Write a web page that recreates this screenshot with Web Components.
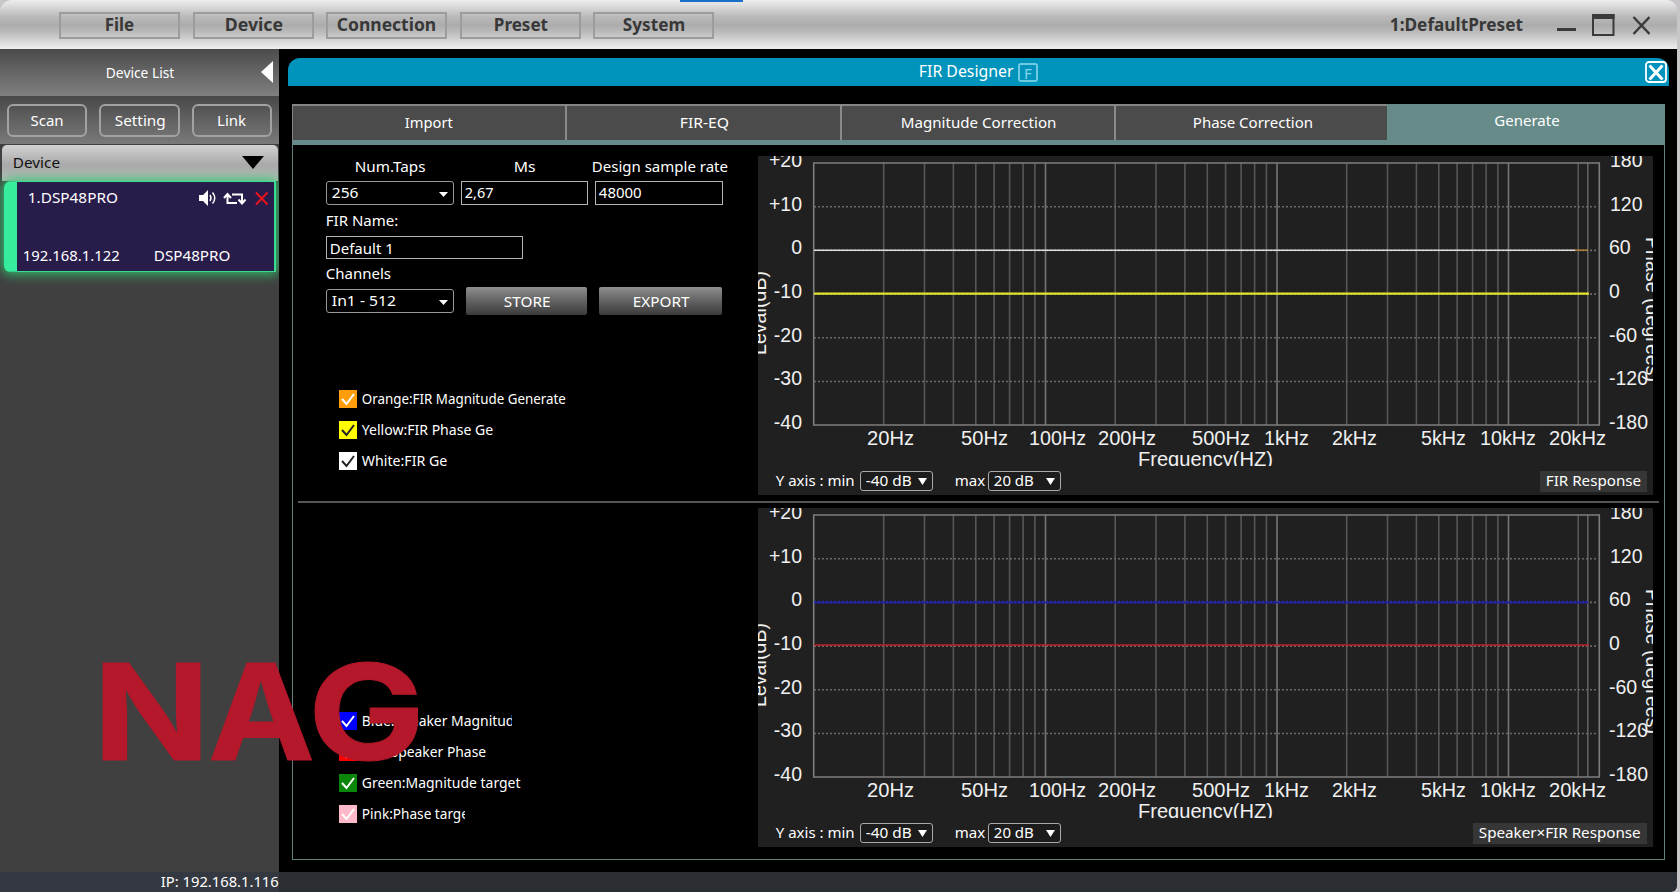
<!DOCTYPE html>
<html lang="en">
<head>
<meta charset="utf-8">
<title>FIR Designer</title>
<style>
    body {
        margin: 0;
        width: 1680px;
        height: 892px;
        overflow: hidden;
        background: #c9c6ca;
        font-family: "Noto Sans", "Open Sans", sans-serif;
        font-size: 15px;
        line-height: 20px;
        color: #fff;
    }
</style>
</head>
<body>
<dsp-app></dsp-app>
<script>
// Text squeezed horizontally to a given width, like a narrower UI face
class FitText extends HTMLElement {
    constructor() {
        super();
        this.attachShadow({ mode: "open" });
        this.shadowRoot.innerHTML = `
            <style>
                :host { display: inline-block; white-space: nowrap; }
                span { display: inline-block; transform-origin: 0 50%; }
            </style>
            <span><slot></slot></span>
        `;
    }

    connectedCallback() {
        const span = this.shadowRoot.querySelector("span");
        const w = Number(this.getAttribute("w"));
        const natural = span.offsetWidth;
        if (!w || !natural) return;
        this.style.width = w + "px";
        span.style.transform = `translate(-0.2px, var(--lift, -1px)) scaleX(${(w / natural).toFixed(4)})`;
    }
}

class AppHeader extends HTMLElement {
    constructor() {
        super();
        this.attachShadow({ mode: "open" });
    }

    connectedCallback() {
        const items = [["File", 29, 13], ["Device", 58, 12], ["Connection", 99, 13], ["Preset", 54, 12], ["System", 62, 0]];
        this.shadowRoot.innerHTML = `
            <style>
                :host {
                    --lift: -0.8px;
                    display: flex;
                    align-items: flex-start;
                    position: relative;
                    box-sizing: border-box;
                    height: 49px;
                    padding: 12px 27px 0 59px;
                    border-radius: 12px 10px 0 0;
                    background: linear-gradient(#ededed 0, #dcdcdc 12%, #b9b9b9 34%, #acacac 52%, #bcbcbc 66%, #e4e4e4 92%, #eee 100%);
                    color: #383838;
                    font-weight: 700;
                    font-size: 18px;
                }
                .item {
                    box-sizing: border-box;
                    width: 121px;
                    height: 27px;
                    border: 2px solid #9c9c9c;
                    text-align: center;
                    line-height: 23px;
                }
                .preset { margin-left: auto; line-height: 27px; }
                svg { margin-left: 33px; }
                .progress {
                    position: absolute;
                    left: 680px;
                    top: 0;
                    width: 63px;
                    height: 2px;
                    background: #1a70c8;
                }
            </style>
            ${items.map(([t, w, gap]) => `<div class="item" style="margin-right:${gap}px"><fit-text w="${w}">${t}</fit-text></div>`).join("")}
            <div class="preset"><fit-text w="133">1:DefaultPreset</fit-text></div>
            <svg width="94" height="27" fill="none" stroke="#3a3a3a">
                <path d="M1 17.500h19" stroke-width="3"/>
                <path d="M37 3h20.500v20H37z" stroke-width="2"/>
                <path d="M36 4.500h22.500" stroke-width="5"/>
                <path d="M77.500 5l16 17M93.500 5l-16 17" stroke-width="2.400"/>
            </svg>
            <div class="progress"></div>
        `;
    }
}

class DeviceCard extends HTMLElement {
    constructor() {
        super();
        this.attachShadow({ mode: "open" });
    }

    connectedCallback() {
        this.shadowRoot.innerHTML = `
            <style>
                :host {
                    display: flex;
                    flex-direction: column;
                    justify-content: space-between;
                    box-sizing: border-box;
                    width: 272px;
                    height: 91px;
                    margin-left: 4px;
                    padding: 6px 5px 4px 6px;
                    border: 1px solid #3bdc92;
                    border-right-width: 2px;
                    border-left: 13px solid #37ec9c;
                    border-radius: 7px 0 0 6px;
                    background: #281c4b;
                    box-shadow: 0 0 12px 2px #2fc46f;
                    position: relative;
                }
                .top { display: flex; align-items: center; padding-left: 5px; }
                svg { margin-left: auto; }
                .bottom { --lift: -1.800px; display: flex; gap: 34px; }
            </style>
            <div class="top">
                <fit-text w="90"><slot name="name"></slot></fit-text>
                <svg width="71" height="20" fill="none" stroke="#fff">
                    <path d="M1 7h4l5-5v16l-5-5H1z" fill="#fff" stroke="none"/>
                    <path d="M12 7q2 3 0 6M14.500 4.500q4.500 5.500 0 11" stroke-width="1.500"/>
                    <path d="M29.500 6.500V15H39M26 10l3.500-4 3.500 4M34 6.500h10V15M40.500 11.500l3.500 4 3.500-4" stroke-width="2"/>
                    <path d="M58 4.500l11.500 12M69.500 4.500l-11.500 12" stroke="#e8131c" stroke-width="2"/>
                </svg>
            </div>
            <div class="bottom">
                <fit-text w="97"><slot name="ip"></slot></fit-text>
                <fit-text w="77"><slot name="model"></slot></fit-text>
            </div>
        `;
    }
}

class DeviceSidebar extends HTMLElement {
    constructor() {
        super();
        this.attachShadow({ mode: "open" });
    }

    connectedCallback() {
        this.shadowRoot.innerHTML = `
            <style>
                :host { display: block; width: 279px; background: #404040; overflow: hidden; }
                .title {
                    display: flex;
                    align-items: center;
                    height: 47px;
                    padding: 0 6px 0 106px;
                    background: linear-gradient(#4b4b4b, #808080);
                }
                .title svg { margin: -1px 0 0 auto; }
                .buttons {
                    --lift: -0.500px;
                    display: flex;
                    gap: 12px;
                    height: 33px;
                    padding: 8px 7px 7px;
                    background: linear-gradient(#484848, #7a7a7a);
                }
                .buttons div {
                    flex: 1;
                    border: 2px solid #a2a2a2;
                    border-radius: 6px;
                    text-align: center;
                    line-height: 29px;
                }
                .group {
                    display: flex;
                    align-items: center;
                    justify-content: space-between;
                    height: 36px;
                    margin: 1px 1px 0 2px;
                    padding: 0 14px 0 11px;
                    border-radius: 5px 5px 0 0;
                    background: linear-gradient(#d2d2d2, #a9a9a9 55%, #bdbdbd);
                    color: #111;
                }
                .group svg { margin-top: -2px; }
            </style>
            <div class="title">
                <fit-text w="69">Device List</fit-text>
                <svg width="12" height="22"><path d="M12 0v22L0 11z" fill="#fff"/></svg>
            </div>
            <div class="buttons">
                <div><fit-text w="33">Scan</fit-text></div>
                <div><fit-text w="51">Setting</fit-text></div>
                <div><fit-text w="29">Link</fit-text></div>
            </div>
            <div class="group">
                <fit-text w="47">Device</fit-text>
                <svg width="22" height="13"><path d="M0 0h22L11 13z" fill="#000"/></svg>
            </div>
            <device-card>
                <span slot="name">1.DSP48PRO</span>
                <span slot="ip">192.168.1.122</span>
                <span slot="model">DSP48PRO</span>
            </device-card>
        `;
    }
}

class TabBar extends HTMLElement {
    constructor() {
        super();
        this.attachShadow({ mode: "open" });
    }

    connectedCallback() {
        const tabs = [["Import", 48], ["FIR-EQ", 49], ["Magnitude Correction", 156], ["Phase Correction", 120], ["Generate", 65]];
        this.shadowRoot.innerHTML = `
            <style>
                :host {
                    display: grid;
                    grid-template-columns: 275px 275px 274px 271px 278px;
                    box-sizing: border-box;
                    height: 41px;
                    border-bottom: 5px solid #668b89;
                }
                div {
                    box-sizing: border-box;
                    background: #4b4b4b;
                    border-top: 2px solid #858585;
                    border-right: 2px solid #8a8a8a;
                    text-align: center;
                    line-height: 34px;
                }
                div:first-of-type { border-left: 1px solid #858585; }
                div:nth-of-type(4) { border-right: 0; padding-left: 3px; }
                div:last-of-type { background: #668b89; border-color: #668b89; border-right: 0; padding-left: 2px; line-height: 31px; }
            </style>
            ${tabs.map(([t, w]) => `<div><fit-text w="${w}">${t}</fit-text></div>`).join("")}
        `;
    }
}

class FieldBox extends HTMLElement {
    constructor() {
        super();
        this.attachShadow({ mode: "open" });
    }

    connectedCallback() {
        const kind = this.getAttribute("kind");
        const arrows = {
            select: `<svg width="9" height="5"><path d="M0 0h9L4.500 5z" fill="#fff"/></svg>`,
            range: `<svg width="9" height="7"><path d="M0 0h9L4.500 7z" fill="#fff"/></svg>`
        };
        this.shadowRoot.innerHTML = `
            <style>
                :host {
                    display: flex;
                    align-items: center;
                    justify-content: space-between;
                    box-sizing: border-box;
                    height: 24px;
                    padding: 0 5px 1px 3px;
                    border: 1.500px solid #b4b4b4;
                    background: #000;
                }
                :host([kind]) { border-radius: 3px; padding-left: 5px; border-color: #989898; }
                :host([kind="range"]) { width: 73px; height: 20px; background: #1c1c1c; border-color: #aaa; }
                svg { flex: none; margin-top: 3px; }
                :host([kind="range"]) svg { margin-top: 2px; }
            </style>
            <fit-text w="${this.getAttribute("text")}"><slot></slot></fit-text>${arrows[kind] || ""}
        `;
    }
}

class CurveCheck extends HTMLElement {
    constructor() {
        super();
        this.attachShadow({ mode: "open" });
    }

    connectedCallback() {
        const color = this.getAttribute("color");
        const mark = this.getAttribute("mark") || "#fff";
        const clip = this.getAttribute("clip");
        this.shadowRoot.innerHTML = `
            <style>
                :host { display: flex; align-items: center; gap: 5px; height: 18px; }
                .label { ${clip ? `overflow: hidden; width: ${clip}px;` : ""} }
                fit-text { vertical-align: top; }
            </style>
            <svg width="18" height="18"><path d="M0 0h18v18H0z" fill="${color}"/><path d="M3 9l4.500 5L15 4" fill="none" stroke="${mark}" stroke-width="2"/></svg>
            <div class="label"><fit-text w="${this.getAttribute("text")}"><slot></slot></fit-text></div>
        `;
    }
}

class GradientButton extends HTMLElement {
    constructor() {
        super();
        this.attachShadow({ mode: "open" });
        this.shadowRoot.innerHTML = `
            <style>
                :host {
                    --lift: 0px;
                    display: block;
                    height: 28px;
                    line-height: 28px;
                    text-align: center;
                    border-radius: 2px;
                    background: linear-gradient(#8f8f8f, #666 45%, #3b3b3b);
                }
            </style>
            <slot></slot>
        `;
    }
}

class ResponseChart extends HTMLElement {
    constructor() {
        super();
        this.attachShadow({ mode: "open" });
    }

    grid() {
        // log axis: 10 Hz sits at x = 56, one decade is 231.5 px
        const x = hz => 56 + Math.log10(hz / 10) * 231.5;
        let out = "";
        for (const base of [10, 100, 1000, 10000]) {
            for (let n = 1; n < 10; n++) {
                const hz = base * n;
                if (hz === 10 || hz > 20000) continue;
                out += `<path d="M${x(hz).toFixed(1)} 7V269" stroke="${n === 1 ? "#757575" : "#565656"}"/>`;
            }
        }
        out += `<path d="M${x(22000).toFixed(1)} 7V269" stroke="#606060"/>`;
        for (let i = 1; i < 6; i++) {
            out += `<path d="M56 ${(7 + i * 43.7).toFixed(1)}H840" stroke="#6a6a6a" stroke-dasharray="2 2"/>`;
        }
        return out;
    }

    curves() {
        if (this.getAttribute("curves") === "fir") {
            return `
                <path d="M56 94.200H817" stroke="#dedbdc" stroke-width="1.500"/>
                <path d="M817 94.200H830" stroke="#b4813c" stroke-width="1.500"/>
                <path d="M56 137.700H831" stroke="#e4e428" stroke-width="2.200"/>
            `;
        }
        return `
            <path d="M56 94.500H830" stroke="#20209a" stroke-width="2"/>
            <path d="M56 93.500H830" stroke="#2a2ac4" stroke-dasharray="2 2" stroke-width="1"/>
            <path d="M56 137H831" stroke="#bd2224" stroke-width="1.600"/>
        `;
    }

    labels() {
        const left = ["+20", "+10", "0", "-10", "-20", "-30", "-40"];
        const right = ["180", "120", "60", "0", "-60", "-120", "-180"];
        const freq = [["20Hz", 109, 47], ["50Hz", 203, 47], ["100Hz", 271, 57], ["200Hz", 340, 58], ["500Hz", 434, 58], ["1kHz", 506, 45],
            ["2kHz", 574, 45], ["5kHz", 663, 45], ["10kHz", 722, 56], ["20kHz", 791, 57]];
        return left.map((t, i) => `<text x="44" y="${11.200 + i * 43.6}" text-anchor="end">${t}</text>`).join("")
            + right.map((t, i) => `<text x="${i < 2 ? 852 : 851}" y="${11.200 + i * 43.6}">${t}</text>`).join("")
            + freq.map(([t, x, w]) => `<text x="${x}" y="289" textLength="${w}" lengthAdjust="spacingAndGlyphs">${t}</text>`).join("");
    }

    connectedCallback() {
        this.shadowRoot.innerHTML = `
            <style>
                :host {
                    display: flex;
                    flex-direction: column;
                    width: 895px;
                    height: 339px;
                    background: #202020;
                }
                svg { display: block; font: 19.500px "Liberation Sans", Arial, sans-serif; }
                .footer { display: flex; align-items: center; height: 20px; margin-top: 5px; padding: 0 6px 0 18px; }
                .min { margin-left: 5px; margin-right: 22px; }
                .max { margin-left: 3px; }
                .name { margin-left: auto; padding: 0 6px; background: #363636; line-height: 21px; }
            </style>
            <svg width="895" height="310" fill="#f0f0f0">
                <g fill="none" stroke-width="1.600">
                    ${this.grid()}
                    <path d="M55.700 7H841.300V269H55.700z" stroke="#7d7d7d"/>
                    ${this.curves()}
                </g>
                ${this.labels()}
                <text x="380" y="310" textLength="135" lengthAdjust="spacingAndGlyphs">Frequency(HZ)</text>
                <text transform="translate(8 199) rotate(-90)" textLength="84">Leval(dB)</text>
                <text transform="translate(887.500 81) rotate(90)" textLength="145">Phase (degrees)</text>
            </svg>
            <div class="footer">
                <fit-text w="79">Y axis : min</fit-text>
                <field-box class="min" kind="range" text="46">-40 dB</field-box>
                <fit-text w="30">max</fit-text>
                <field-box class="max" kind="range" text="40">20 dB</field-box>
                <div class="name"><fit-text w="${this.getAttribute("name-width")}">${this.getAttribute("name")}</fit-text></div>
            </div>
        `;
    }
}

class FirDesigner extends HTMLElement {
    constructor() {
        super();
        this.attachShadow({ mode: "open" });
    }

    connectedCallback() {
        this.shadowRoot.innerHTML = `
            <style>
                :host { display: block; box-sizing: border-box; padding: 9px 8px 0 9px; background: #000; }
                .title {
                    display: flex;
                    align-items: center;
                    height: 28px;
                    padding: 0 2px 0 631px;
                    border-radius: 12px 12px 0 0;
                    background: #0093bb;
                }
                .title svg.close { margin-left: auto; }
                .key {
                    box-sizing: border-box;
                    width: 20px;
                    height: 19px;
                    margin-left: 4px;
                    border: 2px solid #6fcbe2;
                    border-radius: 3px;
                    color: #86d5e8;
                    text-align: center;
                    line-height: 16px;
                }
                .title fit-text { margin-top: -1px; font-size: 16px; }
                .panel { width: 1373px; margin: 18px 0 0 4px; }
                .body {
                    box-sizing: border-box;
                    height: 715px;
                    padding-top: 11px;
                    border: 1px solid #5f8280;
                    border-top: 0;
                }
                section { display: grid; grid-template-columns: 465px 895px; height: 339px; }
                hr { width: 1361px; height: 2px; margin: 6px 0 5px 5px; border: 0; background: #555; }
                .form { padding-left: 33px; }
                .row { display: grid; grid-template-columns: 128px 127px 128px; column-gap: 7px; }
                .heads { --lift: -0.500px; height: 20px; margin-bottom: 5px; justify-items: center; }
                .heads :last-child { justify-self: start; margin-left: -3px; }
                .caption { height: 20px; }
                .name { --lift: 0.500px; width: 197px; height: 23px; }
                .actions { grid-template-columns: 128px 121px 123px; column-gap: 12px; align-items: center; }
                .checks { display: flex; flex-direction: column; gap: 13px; padding-left: 13px; }
            </style>
            <div class="title">
                <fit-text w="95">FIR Designer</fit-text>
                <div class="key">F</div>
                <svg class="close" width="22" height="22" fill="none" stroke="#fff">
                    <rect x="1" y="1" width="20" height="20" rx="3" stroke-width="1.800"/>
                    <path d="M4.500 4.500l13 14M17.500 4.500l-13 14" stroke-width="3"/>
                </svg>
            </div>
            <div class="panel">
                <tab-bar></tab-bar>
                <div class="body">
                    <section>
                        <div class="form">
                            <div class="row heads">
                                <fit-text w="71">Num.Taps</fit-text>
                                <fit-text w="22">Ms</fit-text>
                                <fit-text w="136">Design sample rate</fit-text>
                            </div>
                            <div class="row">
                                <field-box kind="select" text="27">256</field-box>
                                <field-box text="29">2,67</field-box>
                                <field-box text="43">48000</field-box>
                            </div>
                            <div class="caption" style="margin-top:6px"><fit-text w="72">FIR Name:</fit-text></div>
                            <field-box class="name" style="margin-top:5px" text="64">Default 1</field-box>
                            <div class="caption" style="margin-top:5px"><fit-text w="65">Channels</fit-text></div>
                            <div class="row actions" style="margin-top:3px">
                                <field-box kind="select" text="64">In1 - 512</field-box>
                                <gradient-button><fit-text w="47">STORE</fit-text></gradient-button>
                                <gradient-button><fit-text w="57">EXPORT</fit-text></gradient-button>
                            </div>
                            <div class="checks" style="margin-top:75px">
                                <curve-check color="#ff9d0a" text="204">Orange:FIR Magnitude Generate</curve-check>
                                <curve-check color="#ffff00" mark="#222" text="131">Yellow:FIR Phase Ge</curve-check>
                                <curve-check color="#ffffff" mark="#222" text="85">White:FIR Ge</curve-check>
                            </div>
                        </div>
                        <response-chart curves="fir" name="FIR Response" name-width="95"></response-chart>
                    </section>
                    <hr>
                    <section>
                        <div class="form">
                            <div class="checks" style="margin-top:204px">
                                <curve-check color="#0000ff" text="153" clip="150">Blue:Speaker Magnitud</curve-check>
                                <curve-check color="#ff0000" text="124">Red:Speaker Phase</curve-check>
                                <curve-check color="#0a860a" text="159">Green:Magnitude target</curve-check>
                                <curve-check color="#ffb9c8" text="107" clip="103">Pink:Phase targe</curve-check>
                            </div>
                        </div>
                        <response-chart curves="speaker" name="Speaker×FIR Response" name-width="162"></response-chart>
                    </section>
                </div>
            </div>
        `;
    }
}

class StatusBar extends HTMLElement {
    constructor() {
        super();
        this.attachShadow({ mode: "open" });
        this.shadowRoot.innerHTML = `
            <style>
                :host { display: flex; height: 20px; background: #2a2d31; border-radius: 0 0 6px 0; }
                div { width: 279px; background: #343840; text-align: right; line-height: 20px; }
            </style>
            <div><fit-text w="118"><slot></slot></fit-text></div>
        `;
    }
}

class DspApp extends HTMLElement {
    constructor() {
        super();
        this.attachShadow({ mode: "open" });
    }

    connectedCallback() {
        this.shadowRoot.innerHTML = `
            <style>
                :host { display: flex; flex-direction: column; width: 1677px; height: 892px; position: relative; }
                main { display: grid; grid-template-columns: 279px 1fr; height: 823px; }
                .logo { position: absolute; left: 90px; top: 640px; }
            </style>
            <app-header></app-header>
            <main>
                <device-sidebar></device-sidebar>
                <fir-designer></fir-designer>
            </main>
            <status-bar>IP: 192.168.1.116</status-bar>
            <svg class="logo" width="350" height="140" fill="#b4182a" font-family="Inter, sans-serif" font-weight="700" font-size="133">
                <text x="3" y="120" textLength="117" lengthAdjust="spacingAndGlyphs" stroke="#b4182a" stroke-width="1">N</text>
                <text x="118" y="120" textLength="107" lengthAdjust="spacingAndGlyphs" stroke="#b4182a" stroke-width="1">A</text>
                <text x="218" y="120" textLength="117" lengthAdjust="spacingAndGlyphs" stroke="#b4182a" stroke-width="1">G</text>
            </svg>
        `;
    }
}

customElements.define("dsp-app", DspApp);
customElements.define("app-header", AppHeader);
customElements.define("device-sidebar", DeviceSidebar);
customElements.define("device-card", DeviceCard);
customElements.define("fir-designer", FirDesigner);
customElements.define("tab-bar", TabBar);
customElements.define("field-box", FieldBox);
customElements.define("curve-check", CurveCheck);
customElements.define("gradient-button", GradientButton);
customElements.define("response-chart", ResponseChart);
customElements.define("status-bar", StatusBar);
// measured last, once every parent has its own styles
customElements.define("fit-text", FitText);
</script>
</body>
</html>
